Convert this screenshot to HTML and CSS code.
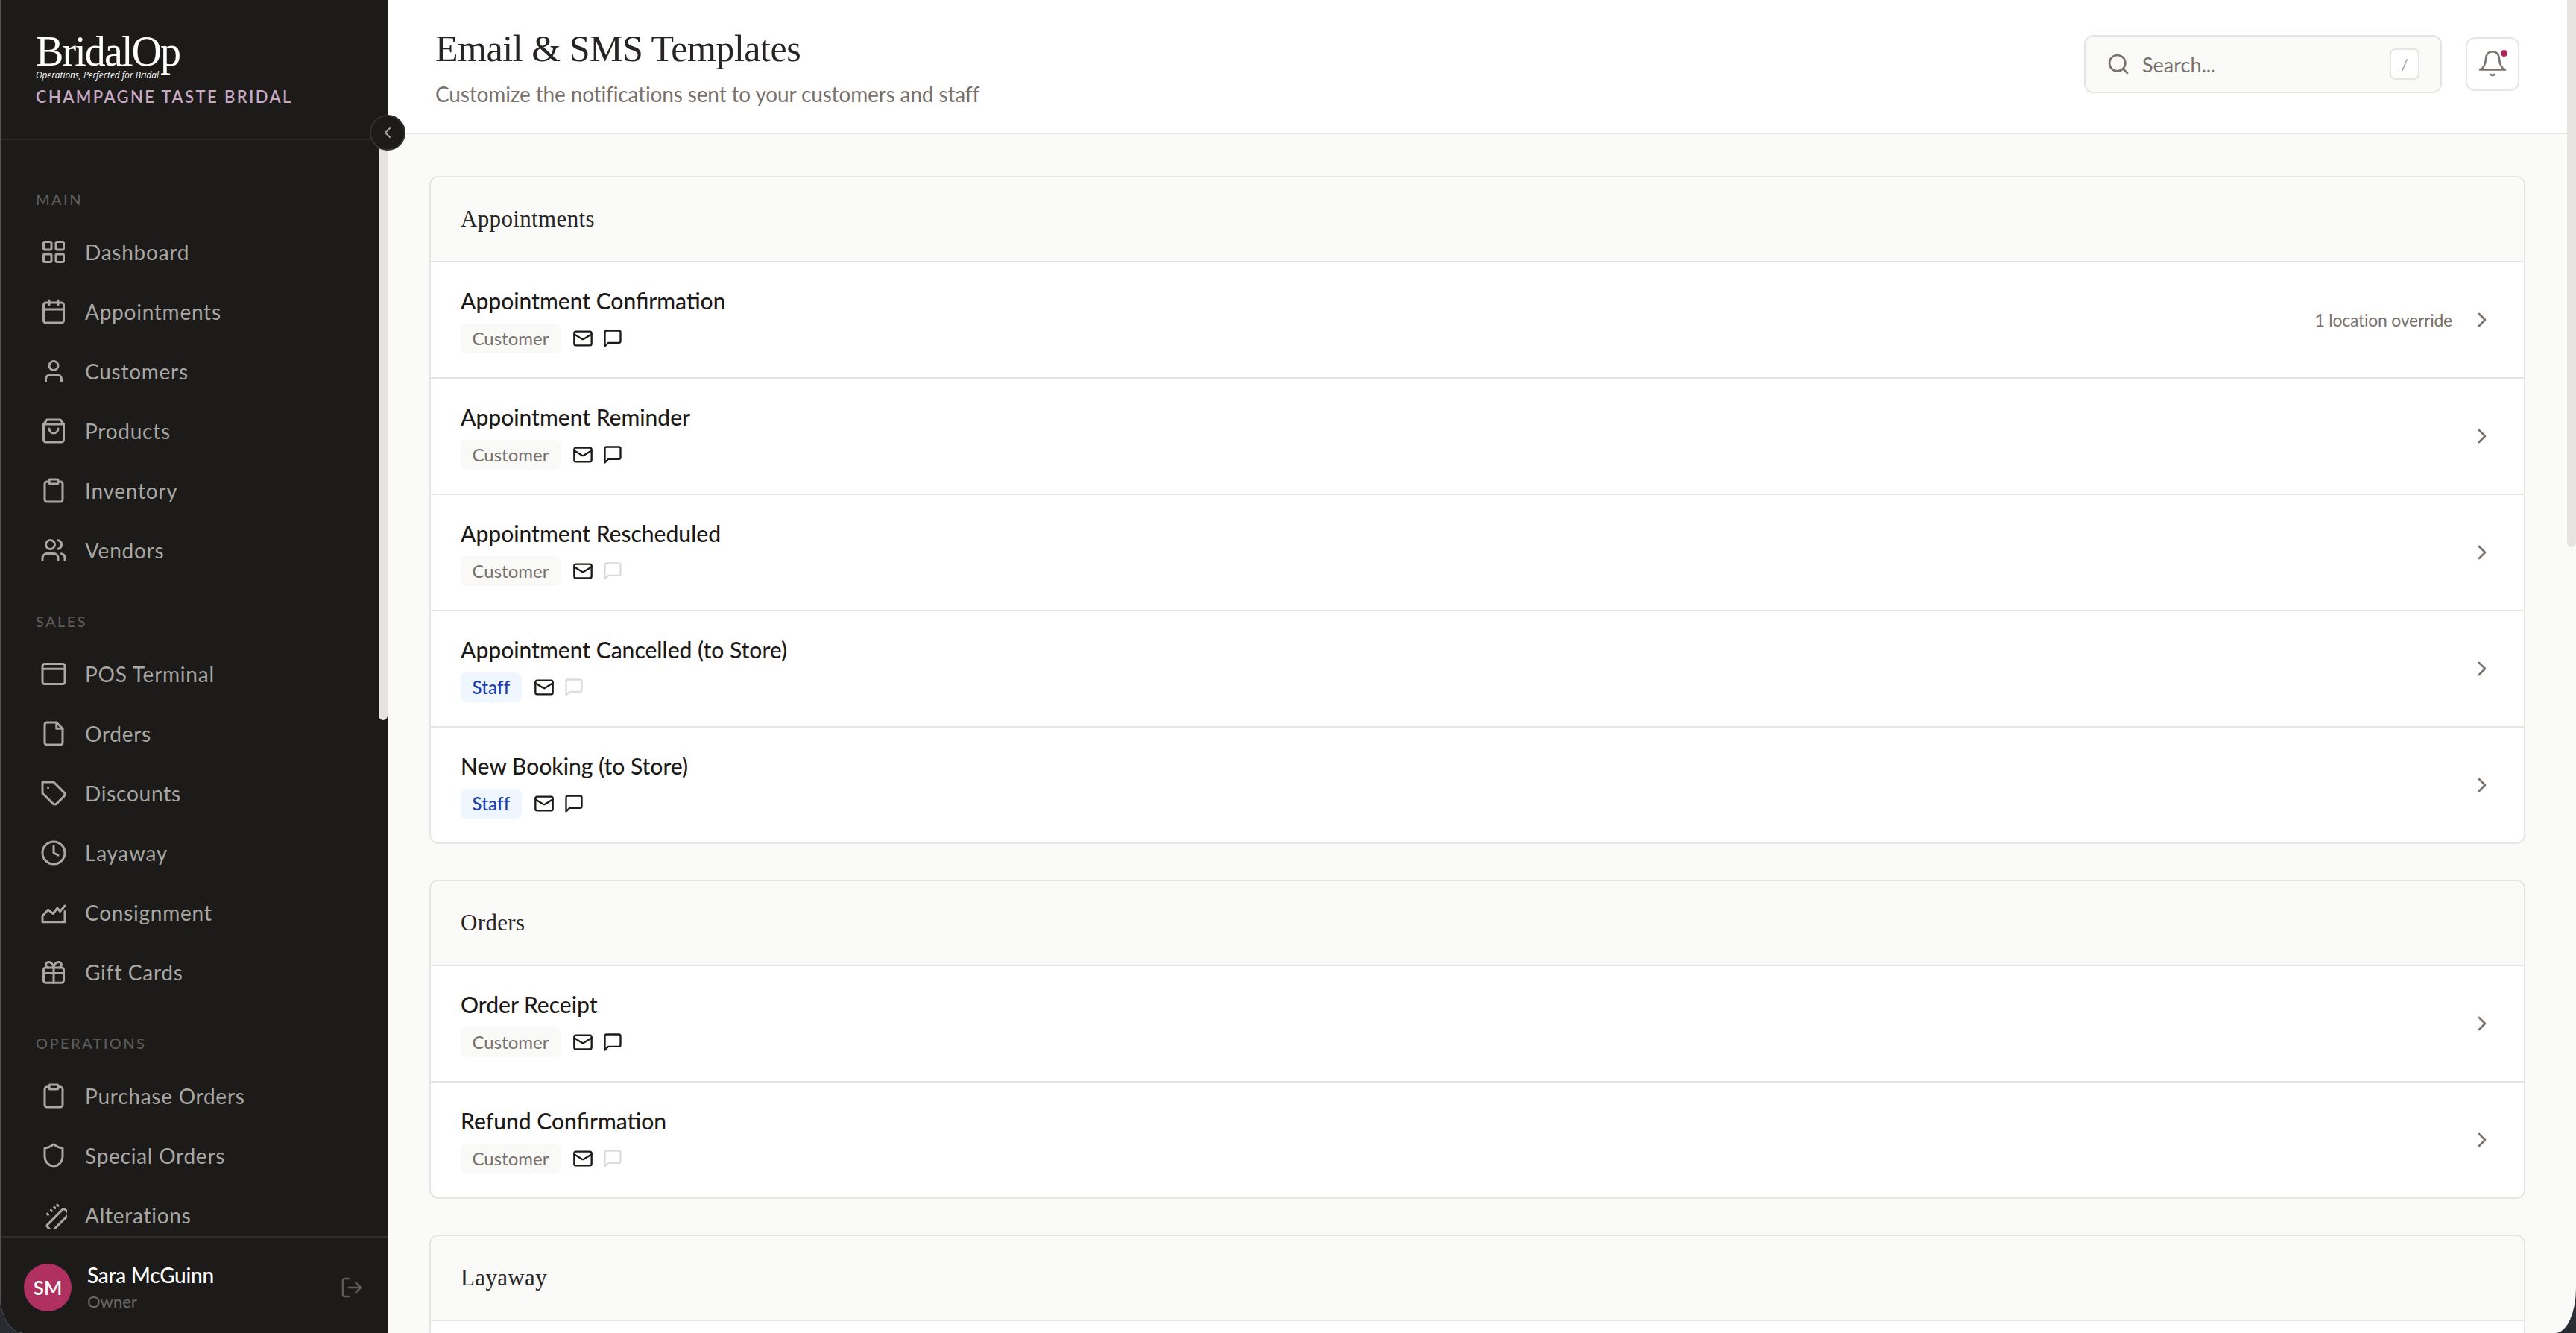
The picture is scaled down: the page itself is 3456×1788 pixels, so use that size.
FILE: index.html
```html
<!DOCTYPE html>
<html lang="en">
<head>
<meta charset="utf-8">
<title>Email &amp; SMS Templates</title>
<link rel="stylesheet" href="styles.css">
</head>
<body>
<svg class="sprite" aria-hidden="true">
  <symbol id="i-grid" viewBox="0 0 24 24"><rect x="3" y="3" width="7" height="7" rx="1"/><rect x="14" y="3" width="7" height="7" rx="1"/><rect x="14" y="14" width="7" height="7" rx="1"/><rect x="3" y="14" width="7" height="7" rx="1"/></symbol>
  <symbol id="i-calendar" viewBox="0 0 24 24"><path d="M8 2v4M16 2v4"/><rect x="3" y="4" width="18" height="18" rx="2"/><path d="M3 10h18"/></symbol>
  <symbol id="i-user" viewBox="0 0 24 24"><path d="M19 21v-2a4 4 0 0 0-4-4H9a4 4 0 0 0-4 4v2"/><circle cx="12" cy="7" r="4"/></symbol>
  <symbol id="i-bag" viewBox="0 0 24 24"><path d="M6 2 3 6v14a2 2 0 0 0 2 2h14a2 2 0 0 0 2-2V6l-3-4Z"/><path d="M3 6h18"/><path d="M16 10a4 4 0 0 1-8 0"/></symbol>
  <symbol id="i-clipboard" viewBox="0 0 24 24"><rect x="8" y="2" width="8" height="4" rx="1"/><path d="M16 4h2a2 2 0 0 1 2 2v14a2 2 0 0 1-2 2H6a2 2 0 0 1-2-2V6a2 2 0 0 1 2-2h2"/></symbol>
  <symbol id="i-users" viewBox="0 0 24 24"><path d="M16 21v-2a4 4 0 0 0-4-4H6a4 4 0 0 0-4 4v2"/><circle cx="9" cy="7" r="4"/><path d="M22 21v-2a4 4 0 0 0-3-3.87"/><path d="M16 3.13a4 4 0 0 1 0 7.75"/></symbol>
  <symbol id="i-card" viewBox="0 0 24 24"><rect x="2" y="3" width="20" height="18" rx="2"/><path d="M2 7.500h20"/></symbol>
  <symbol id="i-file" viewBox="0 0 24 24"><path d="M14.5 2H6a2 2 0 0 0-2 2v16a2 2 0 0 0 2 2h12a2 2 0 0 0 2-2V7.5L14.5 2z"/><path d="M14.5 2v5.5H20"/></symbol>
  <symbol id="i-tag" viewBox="0 0 24 24"><path d="M12 2H2v10l9.29 9.29c.94.94 2.48.94 3.42 0l6.58-6.58c.94-.94.94-2.48 0-3.42L12 2Z"/><path d="M7 7h.01"/></symbol>
  <symbol id="i-clock" viewBox="0 0 24 24"><circle cx="12" cy="12" r="10"/><path d="M12 6v6l4 2"/></symbol>
  <symbol id="i-chart" viewBox="0 0 24 24"><path d="M22 11v9.5H2V15l5-5.5 4.5 3.5 3.8-5 2.4 3L22 6"/></symbol>
  <symbol id="i-gift" viewBox="0 0 24 24"><rect x="3" y="8" width="18" height="13.5" rx="2"/><path d="M3 13h18M12 8v13.5"/><path d="M7.5 8a2.5 2.5 0 0 1 0-5A4.8 8 0 0 1 12 8a4.8 8 0 0 1 4.5-5 2.5 2.5 0 0 1 0 5"/></symbol>
  <symbol id="i-shield" viewBox="0 0 24 24"><path d="M20 13c0 5-3.5 7.5-7.66 8.95a1 1 0 0 1-.67-.01C7.5 20.5 4 18 4 13V6a1 1 0 0 1 1-1c2 0 4.5-1.2 6.24-2.72a1.17 1.17 0 0 1 1.52 0C14.51 3.81 17 5 19 5a1 1 0 0 1 1 1z"/></symbol>
  <symbol id="i-ruler" viewBox="0 0 24 24"><path d="M9 25 6.5 22.5a1.5 1.5 0 0 1 0-2.1L20 6.900a1.500 1.500 0 0 1 2.100 0L26 10.800 12 25"/><path d="M6.200 10.800l.8.8M9.500 7.500l.8.8M12.500 4.800l.8.8M15.200 2.700l.8.8"/></symbol>
  <symbol id="i-logout" viewBox="0 0 24 24"><path d="M9 21H5a2 2 0 0 1-2-2V5a2 2 0 0 1 2-2h4"/><path d="m16 17 5-5-5-5"/><path d="M21 12H9"/></symbol>
  <symbol id="i-mail" viewBox="0 0 24 24"><rect x="2" y="4" width="20" height="16" rx="2"/><path d="m22 7-8.97 5.7a1.94 1.94 0 0 1-2.06 0L2 7"/></symbol>
  <symbol id="i-message" viewBox="0 0 24 24"><path d="M21 15a2 2 0 0 1-2 2H7l-4 4V5a2 2 0 0 1 2-2h14a2 2 0 0 1 2 2z"/></symbol>
  <symbol id="i-chevron" viewBox="0 0 24 24"><path d="m9 18 6-6-6-6"/></symbol>
  <symbol id="i-chevron-left" viewBox="0 0 24 24"><path d="m15 18-6-6 6-6"/></symbol>
  <symbol id="i-search" viewBox="0 0 24 24"><circle cx="11" cy="11" r="8"/><path d="m21 21-4.3-4.3"/></symbol>
  <symbol id="i-bell" viewBox="0 0 40 40"><path d="M3 27.5C8.5 25.5 10.5 20 11 13 11.5 6.5 15 3.3 20 3.3S28.500 6.500 29 13C29.500 20 31.500 25.500 37 27.500Z"/><path d="M17.500 34c1.500 1.200 3.500 1.200 5 0"/></symbol>
</svg>

<div class="window">
  <aside class="sidebar">
    <div class="brand">
      <div class="logo">BridalOp</div>
      <div class="tagline">Operations, Perfected for Bridal</div>
      <div class="store">CHAMPAGNE TASTE BRIDAL</div>
    </div>
    <nav class="nav">
      <div class="nav-thumb"></div>
      <div class="nav-label">MAIN</div>
      <a class="nav-item"><svg class="nav-ico"><use href="#i-grid"/></svg>Dashboard</a>
      <a class="nav-item"><svg class="nav-ico"><use href="#i-calendar"/></svg>Appointments</a>
      <a class="nav-item"><svg class="nav-ico"><use href="#i-user"/></svg>Customers</a>
      <a class="nav-item"><svg class="nav-ico"><use href="#i-bag"/></svg>Products</a>
      <a class="nav-item"><svg class="nav-ico"><use href="#i-clipboard"/></svg>Inventory</a>
      <a class="nav-item"><svg class="nav-ico"><use href="#i-users"/></svg>Vendors</a>
      <div class="nav-label">SALES</div>
      <a class="nav-item"><svg class="nav-ico"><use href="#i-card"/></svg>POS Terminal</a>
      <a class="nav-item"><svg class="nav-ico"><use href="#i-file"/></svg>Orders</a>
      <a class="nav-item"><svg class="nav-ico"><use href="#i-tag"/></svg>Discounts</a>
      <a class="nav-item"><svg class="nav-ico"><use href="#i-clock"/></svg>Layaway</a>
      <a class="nav-item"><svg class="nav-ico"><use href="#i-chart"/></svg>Consignment</a>
      <a class="nav-item"><svg class="nav-ico"><use href="#i-gift"/></svg>Gift Cards</a>
      <div class="nav-label">OPERATIONS</div>
      <a class="nav-item"><svg class="nav-ico"><use href="#i-clipboard"/></svg>Purchase Orders</a>
      <a class="nav-item"><svg class="nav-ico"><use href="#i-shield"/></svg>Special Orders</a>
      <a class="nav-item"><svg class="nav-ico"><use href="#i-ruler"/></svg>Alterations</a>
    </nav>
    <div class="account">
      <div class="avatar">SM</div>
      <div class="who">
        <div class="who-name">Sara McGuinn</div>
        <div class="who-role">Owner</div>
      </div>
      <svg class="logout"><use href="#i-logout"/></svg>
    </div>
  </aside>

  <button class="collapse" type="button"><svg class="collapse-ico"><use href="#i-chevron-left"/></svg></button>

  <main class="main">
    <div class="main-thumb"></div>
    <header class="topbar">
      <div class="titles">
        <h1 class="page-title">Email &amp; SMS Templates</h1>
        <p class="page-sub">Customize the notifications sent to your customers and staff</p>
      </div>
      <div class="actions">
        <div class="search">
          <svg class="search-ico"><use href="#i-search"/></svg>
          <span class="search-text">Search...</span>
          <span class="kbd">/</span>
        </div>
        <div class="bell-btn">
          <svg class="bell-ico"><use href="#i-bell"/></svg>
          <span class="bell-dot"></span>
        </div>
      </div>
    </header>

    <div class="content">
      <section class="card">
        <h2 class="card-head">Appointments</h2>
        <div class="row">
          <div class="row-main">
            <div class="row-title">Appointment Confirmation</div>
            <div class="row-meta"><span class="badge">Customer</span><span class="chans"><svg class="chan"><use href="#i-mail"/></svg><svg class="chan"><use href="#i-message"/></svg></span></div>
          </div>
          <span class="override">1 location override</span>
          <svg class="chev"><use href="#i-chevron"/></svg>
        </div>
        <div class="row">
          <div class="row-main">
            <div class="row-title">Appointment Reminder</div>
            <div class="row-meta"><span class="badge">Customer</span><span class="chans"><svg class="chan"><use href="#i-mail"/></svg><svg class="chan"><use href="#i-message"/></svg></span></div>
          </div>
          <svg class="chev"><use href="#i-chevron"/></svg>
        </div>
        <div class="row">
          <div class="row-main">
            <div class="row-title">Appointment Rescheduled</div>
            <div class="row-meta"><span class="badge">Customer</span><span class="chans"><svg class="chan"><use href="#i-mail"/></svg><svg class="chan off"><use href="#i-message"/></svg></span></div>
          </div>
          <svg class="chev"><use href="#i-chevron"/></svg>
        </div>
        <div class="row">
          <div class="row-main">
            <div class="row-title">Appointment Cancelled (to Store)</div>
            <div class="row-meta"><span class="badge staff">Staff</span><span class="chans"><svg class="chan"><use href="#i-mail"/></svg><svg class="chan off"><use href="#i-message"/></svg></span></div>
          </div>
          <svg class="chev"><use href="#i-chevron"/></svg>
        </div>
        <div class="row">
          <div class="row-main">
            <div class="row-title">New Booking (to Store)</div>
            <div class="row-meta"><span class="badge staff">Staff</span><span class="chans"><svg class="chan"><use href="#i-mail"/></svg><svg class="chan"><use href="#i-message"/></svg></span></div>
          </div>
          <svg class="chev"><use href="#i-chevron"/></svg>
        </div>
      </section>

      <section class="card">
        <h2 class="card-head">Orders</h2>
        <div class="row">
          <div class="row-main">
            <div class="row-title">Order Receipt</div>
            <div class="row-meta"><span class="badge">Customer</span><span class="chans"><svg class="chan"><use href="#i-mail"/></svg><svg class="chan"><use href="#i-message"/></svg></span></div>
          </div>
          <svg class="chev"><use href="#i-chevron"/></svg>
        </div>
        <div class="row">
          <div class="row-main">
            <div class="row-title">Refund Confirmation</div>
            <div class="row-meta"><span class="badge">Customer</span><span class="chans"><svg class="chan"><use href="#i-mail"/></svg><svg class="chan off"><use href="#i-message"/></svg></span></div>
          </div>
          <svg class="chev"><use href="#i-chevron"/></svg>
        </div>
      </section>

      <section class="card">
        <h2 class="card-head">Layaway</h2>
        <div class="row row-blank"></div>
      </section>
    </div>
  </main>
</div>
</body>
</html>
```
FILE: styles.css
```css
* { box-sizing: border-box; }
html, body { height: 100%; margin: 0; }
body {
  background: #2a2c33;
  font-family: "Lato", "Liberation Sans", sans-serif;
  color: #1c1917;
  overflow: hidden;
}
.sprite { display: none; }

.window {
  position: relative;
  display: flex;
  height: 100vh;
  overflow: hidden;
  background: #fafaf8;
  border-radius: 0 0 28px 32px / 0 0 60px 50px;
}

/* sidebar */
.sidebar {
  flex: 0 0 520px;
  display: flex;
  flex-direction: column;
  background: #1c1b19;
  border-left: 2px solid #555452;
}
.brand {
  height: 188px;
  flex: none;
  padding: 44px 0 0 46px;
  border-bottom: 2px solid #2e2d2b;
}
.logo {
  font-family: "Liberation Serif", serif;
  font-size: 56px;
  line-height: 50px;
  letter-spacing: -1.900px;
  color: #fff;
}
.tagline {
  font-family: "Open Sans", sans-serif;
  font-style: italic;
  font-size: 11.800px;
  line-height: 12px;
  color: #fff;
}
.store {
  margin-top: 10px;
  font-size: 22px;
  line-height: 28px;
  font-weight: 600;
  letter-spacing: 2.400px;
  color: #c9a8c3;
  white-space: nowrap;
}
.nav {
  position: relative;
  flex: 1;
  min-height: 0;
  overflow: hidden;
  padding-top: 65px;
}
.nav-thumb {
  position: absolute;
  top: 0;
  right: 0;
  width: 12px;
  height: 778px;
  background: #e5e4e2;
  border-radius: 0 0 6px 6px;
}
.nav-label {
  margin: 41px 0 17px 46px;
  font-size: 20px;
  line-height: 28px;
  font-weight: 500;
  letter-spacing: 2.400px;
  color: #5c5b59;
}
.nav-label:nth-child(2) { margin-top: 0; }
.nav-item {
  display: flex;
  align-items: center;
  gap: 24px;
  height: 80px;
  padding-left: 52px;
  font-size: 28px;
  letter-spacing: .75px;
  color: #a8a7a4;
}
.nav-ico {
  flex: none;
  width: 36px;
  height: 36px;
  fill: none;
  stroke: currentColor;
  stroke-width: 2;
  stroke-linecap: round;
  stroke-linejoin: round;
}
.account {
  flex: none;
  height: 130px;
  display: flex;
  align-items: center;
  gap: 21px;
  padding: 6px 32px 0 30px;
  border-top: 2px solid #2e2d2b;
}
.avatar {
  flex: none;
  width: 64px;
  height: 64px;
  display: flex;
  align-items: center;
  justify-content: center;
  border-radius: 50%;
  background: #b03060;
  color: #fff;
  font-size: 26px;
  font-weight: 600;
}
.who { flex: 1; padding-top: 2px; }
.who-name {
  font-size: 28px;
  line-height: 36px;
  font-weight: 500;
  letter-spacing: -.25px;
  color: #fff;
}
.who-role {
  font-size: 22px;
  line-height: 36px;
  color: #6b6a68;
}
.logout {
  flex: none;
  width: 32px;
  height: 32px;
  fill: none;
  stroke: #5d5c5a;
  stroke-width: 2;
  stroke-linecap: round;
  stroke-linejoin: round;
}

/* collapse handle straddles sidebar and main */
.collapse {
  position: absolute;
  left: 496px;
  top: 154px;
  z-index: 3;
  width: 48px;
  height: 48px;
  padding: 0;
  display: flex;
  align-items: center;
  justify-content: center;
  background: #1c1b19;
  border: 2px solid #333230;
  border-radius: 50%;
  color: #a8a7a4;
}
.collapse-ico {
  width: 24px;
  height: 24px;
  fill: none;
  stroke: currentColor;
  stroke-width: 2;
  stroke-linecap: round;
  stroke-linejoin: round;
}

/* main */
.main {
  position: relative;
  flex: 1;
  min-width: 0;
  overflow: hidden;
  padding-right: 12px;
}
.main-thumb {
  position: absolute;
  top: 0;
  right: 0;
  width: 12px;
  height: 734px;
  background: #e5e4e2;
  border-radius: 0 0 6px 6px;
}
.topbar {
  height: 180px;
  display: flex;
  justify-content: space-between;
  align-items: flex-start;
  padding: 35px 64px 0;
  background: #fff;
  border-bottom: 2px solid #e7e5e3;
}
.page-title {
  margin: 0;
  font-family: "Liberation Serif", serif;
  font-size: 50px;
  line-height: 60px;
  font-weight: 400;
  letter-spacing: -.45px;
  color: #292524;
}
.page-sub {
  margin: 11px 0 0;
  font-size: 28px;
  line-height: 40px;
  letter-spacing: -.15px;
  color: #78716c;
}
.actions {
  display: flex;
  align-items: center;
  gap: 32px;
  margin-top: 12px;
}
.search {
  width: 480px;
  height: 78px;
  display: flex;
  align-items: center;
  gap: 16px;
  padding: 0 28px;
  background: #fafaf8;
  border: 2px solid #e7e5e3;
  border-radius: 12px;
}
.search-ico {
  flex: none;
  width: 32px;
  height: 32px;
  fill: none;
  stroke: #78716c;
  stroke-width: 2;
  stroke-linecap: round;
  stroke-linejoin: round;
}
.search-text {
  flex: 1;
  font-size: 27px;
  color: #78716c;
}
.kbd {
  width: 40px;
  height: 42px;
  display: flex;
  align-items: center;
  justify-content: center;
  background: #fff;
  border: 2px solid #e7e5e3;
  border-radius: 8px;
  font-size: 22px;
  color: #a8a29e;
}
.bell-btn {
  position: relative;
  width: 72px;
  height: 72px;
  display: flex;
  align-items: center;
  justify-content: center;
  background: #fff;
  border: 2px solid #e7e5e3;
  border-radius: 12px;
}
.bell-ico {
  width: 40px;
  height: 40px;
  fill: none;
  stroke: #78716c;
  stroke-width: 2.600;
  stroke-linecap: round;
  stroke-linejoin: round;
}
.bell-dot {
  position: absolute;
  left: 45px;
  top: 15px;
  width: 9px;
  height: 9px;
  border-radius: 50%;
  background: #b0245e;
}

.content { padding: 56px 56px 0; }
.card {
  margin-bottom: 48px;
  background: #fff;
  border: 2px solid #e7e5e3;
  border-radius: 12px;
  overflow: hidden;
}
.card-head {
  height: 114px;
  margin: 0;
  display: flex;
  align-items: center;
  padding-left: 40px;
  background: #fafaf8;
  border-bottom: 2px solid #e7e5e3;
  font-family: "Liberation Serif", serif;
  font-size: 31px;
  font-weight: 400;
  letter-spacing: .35px;
  color: #292524;
}
.row {
  height: 156px;
  display: flex;
  align-items: center;
  gap: 24px;
  padding: 0 40px;
  border-bottom: 2px solid #e7e5e3;
}
.row:last-child { height: 154px; border-bottom: 0; }
.row-main { flex: 1; min-width: 0; padding-bottom: 3px; }
.row-title {
  font-size: 30px;
  line-height: 42px;
  font-weight: 500;
  color: #1c1917;
}
.row-meta {
  display: flex;
  align-items: center;
  gap: 16px;
  margin-top: 10px;
}
.badge {
  height: 40px;
  display: flex;
  align-items: center;
  padding: 0 15.500px;
  background: #f9f9f7;
  border-radius: 8px;
  font-size: 24px;
  color: #78716c;
}
.badge.staff {
  background: #eff6ff;
  color: #1e40af;
  font-weight: 500;
  letter-spacing: .2px;
}
.chans { display: flex; align-items: center; gap: 12px; }
.chan {
  width: 28px;
  height: 28px;
  fill: none;
  stroke: #1c1917;
  stroke-width: 2;
  stroke-linecap: round;
  stroke-linejoin: round;
}
.chan.off { stroke: #dedcda; }
.override { font-size: 23px; letter-spacing: -.25px; color: #78716c; }
.chev {
  flex: none;
  width: 32px;
  height: 32px;
  fill: none;
  stroke: #78716c;
  stroke-width: 2;
  stroke-linecap: round;
  stroke-linejoin: round;
}
```
